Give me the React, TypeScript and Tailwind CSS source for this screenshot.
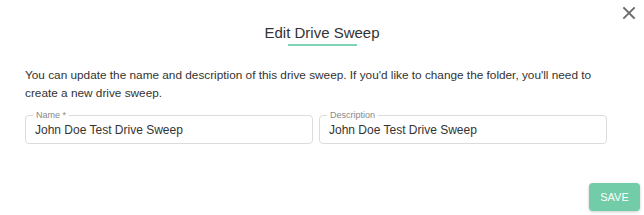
import React from "react";

export default function App() {
  return (
    <div
      className="relative w-[644px] h-[215px] bg-white text-[#333333]"
      style={{ fontFamily: '"Liberation Sans", Arial, sans-serif' }}
    >
      <button className="absolute right-[7px] top-[5px] w-[16px] h-[16px] flex items-center justify-center text-[#6b6b6b]">
        <svg width="14" height="14" viewBox="0 0 14 14" fill="none" stroke="currentColor" strokeWidth="1.8" strokeLinecap="square">
          <path d="M2 2L12 12M12 2L2 12" />
        </svg>
      </button>
      <div className="flex flex-col items-center pt-[24px]">
        <div className="text-[15px] leading-[18px] text-[#333333]">Edit Drive Sweep</div>
        <div className="mt-[2px] w-[69px] h-[2px] bg-[#7dd3b5]" />
      </div>
      <p className="mt-[20px] px-[25px] text-[11.8px] leading-[18px] text-[#333333]">
        You can update the name and description of this drive sweep. If you'd like to change the folder, you'll need to create a new drive sweep.
      </p>
      <div className="flex gap-[6px] px-[25px] mt-[13px]">
        <div className="relative w-[288px] h-[29px] border border-[#dcdcdc] rounded-[4px] flex items-center px-[9px]">
          <span className="absolute -top-[6px] left-[7px] px-[3px] bg-white text-[9px] leading-[10px] text-[#888888]">Name *</span>
          <span className="text-[12px] text-[#333333]">John Doe Test Drive Sweep</span>
        </div>
        <div className="relative w-[288px] h-[29px] border border-[#dcdcdc] rounded-[4px] flex items-center px-[9px]">
          <span className="absolute -top-[6px] left-[7px] px-[3px] bg-white text-[9px] leading-[10px] text-[#888888]">Description</span>
          <span className="text-[12px] text-[#333333]">John Doe Test Drive Sweep</span>
        </div>
      </div>
      <div className="flex justify-end pr-[4px] mt-[39px]">
        <button className="w-[51px] h-[28px] rounded-[4px] bg-[#72cca8] text-white text-[11px] shadow-[0_1px_3px_rgba(0,0,0,0.2)]">
          SAVE
        </button>
      </div>
    </div>
  );
}
